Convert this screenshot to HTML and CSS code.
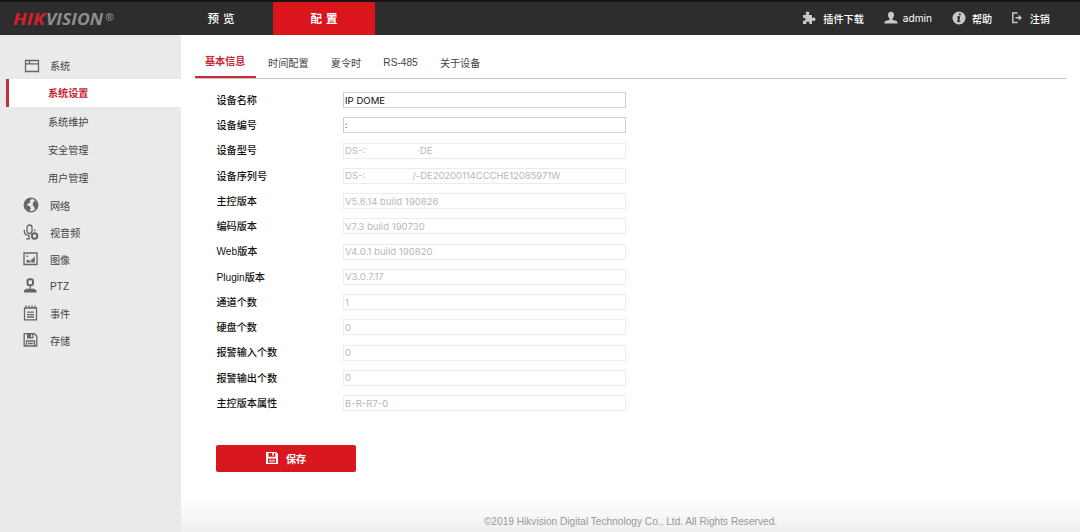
FILE: index.html
```html
<!DOCTYPE html>
<html lang="zh-CN">
<head>
<meta charset="utf-8">
<title>配置</title>
<link rel="stylesheet" href="styles.css">
</head>
<body>
<header class="header">
  <div class="logo"><svg width="103" height="17" viewBox="0 0 103 17"><g class="logo-text"><text class="logo-red" x="0" y="14.700" textLength="32" lengthAdjust="spacingAndGlyphs">HIK</text><text class="logo-gray" x="33" y="14.700" textLength="57" lengthAdjust="spacingAndGlyphs">VISION</text></g><text class="logo-reg" x="92.500" y="10.600">®</text></svg></div>
  <nav class="main-nav"><a class="nav-item">预 览</a><a class="nav-item nav-active">配 置</a></nav>
  <div class="tools">
    <a class="tool tool-plugin"><svg width="14" height="14" viewBox="0 0 14 14"><path d="M1 4h3.300C3 1.600 4 .6 5.500.6S8 1.600 6.800 4H10v3c2-1.100 3.500-.5 3.500 1.200S12 10.500 10 9.400V13H7.200c.6-1.700 0-2.600-1.400-2.600S3.800 11.300 4.400 13H1V9.600c1.700.5 2.500 0 2.500-1.300S2.700 6.500 1 7z"/></svg>插件下载</a>
    <a class="tool tool-user"><svg width="14" height="14" viewBox="0 0 14 14"><path d="M7 .8c2 0 3 1.300 3 3.100C10 5.500 9.300 6.700 8.500 7.400v1.400L12.500 10c.8.3 1 .8 1 2.600H.5c0-1.800.2-2.300 1-2.600l4-1.200V7.400C4.700 6.700 4 5.500 4 3.900 4 2.100 5 .8 7 .8z"/></svg>admin</a>
    <a class="tool tool-help"><svg width="14" height="14" viewBox="0 0 14 14"><circle cx="7" cy="7" r="6.500"/><path class="cut" d="M7.200 2.500h1.700L8.600 4.200H6.900zM5.200 5.300h3L7.400 10h1v1H5.100l.8-4.600h-.9z"/></svg>帮助</a>
    <a class="tool tool-exit"><svg width="12" height="14" viewBox="0 0 12 14"><path class="line" d="M6.500 2H1.800v9.500h4.700M4.500 6.800H10"/><path d="M7.700 3.800l3.300 3-3.300 3z"/></svg>注销</a>
  </div>
</header>
<div class="body">
  <aside class="sidebar">
    <a class="group first"><svg width="16" height="16" viewBox="0 0 16 16"><path d="M1.500 2.500h13v11h-13zM1.500 5.800h13M5.500 2.500v3"/></svg>系统</a>
    <a class="sub sub-active">系统设置</a>
    <a class="sub">系统维护</a>
    <a class="sub">安全管理</a>
    <a class="sub sub-last">用户管理</a>
    <a class="group"><svg width="16" height="16" viewBox="0 0 16 16"><circle cx="8" cy="8" r="6.800"/><path class="solid" d="M2 5C3 2.600 5 1.300 7.600 1.200L8.500 2.500 6.500 4 7.500 5.500 5 6.500 4 8.500 6.500 9l1.200 2-1 3.300C3 13 1 10 2 5zM10 6l1.500-2.500L13.500 5l1 3-1.200 3.500L11.500 12l-.5-2.500L9.500 8z"/></svg>网络</a>
    <a class="group"><svg width="16" height="16" viewBox="0 0 16 16"><rect x="4" y="1" width="5" height="8.500" rx="2.500"/><path d="M1.300 6v1.500C1.500 10 3.500 11.500 6.500 11.500M6 11.500V14.500M3 14.800h4M11.600 5.500v1.800"/><circle class="bold" cx="11.600" cy="12" r="2.700"/></svg>视音频</a>
    <a class="group"><svg width="16" height="16" viewBox="0 0 16 16"><path d="M1 2h13v11.500H1z"/><path class="solid" d="M3.500 11.500V9.800L5 8.500l1.500 1.300 1-.8v2.500zM8.300 11.500V8.500l1.500-.8L11.700 5v6.500zM3.500 4.500h1.500V6H3.500z"/></svg>图像</a>
    <a class="group"><svg width="16" height="16" viewBox="0 0 16 16"><rect class="bold" x="4.500" y="1.300" width="5.500" height="6" rx="2"/><path d="M7.200 7.500v4M2.500 11.300h9.500"/><path class="solid" d="M1 12h12.500v2.500H1z"/></svg>PTZ</a>
    <a class="group"><svg width="16" height="16" viewBox="0 0 16 16"><path d="M1.500 3h12v11.800h-12zM4 7.200h7M4 9.600h7M4 12h7M3 .5v3M6 .5v3M9 .5v3M12 .5v3"/></svg>事件</a>
    <a class="group"><svg width="16" height="16" viewBox="0 0 16 16"><path d="M1.200 1.700h10.300l2.300 2.500v9.800H1.200zM3.500 14V9h8v5M5 11.500h5"/><path class="solid" d="M4 2h6.500v4.500H4z"/><path class="hole" d="M8 2.500h1.300v2.800H8z"/></svg>存储</a>
  </aside>
  <main class="main">
    <nav class="tabs"><a class="tab tab-active">基本信息</a><a class="tab">时间配置</a><a class="tab">夏令时</a><a class="tab">RS-485</a><a class="tab">关于设备</a></nav>
    <div class="form">
      <div class="row"><span class="label">设备名称</span><div class="field enabled">IP DOME</div></div>
      <div class="row"><span class="label">设备编号</span><div class="field enabled"><span class="mark">:</span></div></div>
      <div class="row"><span class="label">设备型号</span><div class="field"><span class="prefix">DS-:</span><span class="model">·DE</span></div></div>
      <div class="row"><span class="label">设备序列号</span><div class="field"><span class="prefix">DS-:</span><span class="serial">/-DE20200114CCCHE12085971W</span></div></div>
      <div class="row"><span class="label">主控版本</span><div class="field">V5.6.14 build 190826</div></div>
      <div class="row"><span class="label">编码版本</span><div class="field">V7.3 build 190730</div></div>
      <div class="row"><span class="label">Web版本</span><div class="field">V4.0.1 build 190820</div></div>
      <div class="row"><span class="label">Plugin版本</span><div class="field">V3.0.7.17</div></div>
      <div class="row"><span class="label">通道个数</span><div class="field">1</div></div>
      <div class="row"><span class="label">硬盘个数</span><div class="field">0</div></div>
      <div class="row"><span class="label">报警输入个数</span><div class="field">0</div></div>
      <div class="row"><span class="label">报警输出个数</span><div class="field">0</div></div>
      <div class="row"><span class="label">主控版本属性</span><div class="field">B-R-R7-0</div></div>
    </div>
    <button class="save"><svg width="12" height="12" viewBox="0 0 12 12"><path fill-rule="evenodd" d="M0 0h10l2 2v10H0zM2.500 1v3.700h6.800V1H8v2.500H6.300V1zM2 6.500V11h8V6.500zM3 7.700h6v.9H3zM3 9.500h6v.8H3z"/></svg>保存</button>
    <footer class="footer">©2019 Hikvision Digital Technology Co., Ltd. All Rights Reserved.</footer>
  </main>
</div>
</body>
</html>
```
FILE: styles.css
```css
* { box-sizing: border-box; }
body {
  margin: 0;
  width: 1080px;
  height: 532px;
  overflow: hidden;
  display: flex;
  flex-direction: column;
  font-family: "Liberation Sans", "Noto Sans CJK SC", sans-serif;
  font-size: 10.15px;
  color: #111;
  background: #fff;
}
.header {
  height: 35px;
  flex: none;
  display: flex;
  background: #2d2d2d;
  border-top: 2px solid #151515;
  color: #fff;
}
.logo { width: 172px; padding: 8px 0 0 13px; }
.logo svg { display: block; overflow: visible; }
.logo-text { font: italic bold 16.5px "Open Sans", sans-serif; }
.logo-red { fill: #d3202b; }
.logo-gray { fill: #8e8e91; }
.logo-reg { font: bold 11px "Liberation Sans", sans-serif; fill: #8e8e91; }
.main-nav { display: flex; }
.nav-item {
  width: 101px;
  display: flex;
  align-items: center;
  justify-content: center;
  padding-bottom: 1px;
  font-size: 11.5px;
  font-weight: 500;
  word-spacing: 1px;
}
.nav-item:first-child { padding-right: 3px; }
.nav-active { width: 102px; background: #da151c; font-weight: 700; }
.tools { margin-left: auto; display: flex; align-items: center; padding: 0 30px 1px 0; font-weight: 500; }
.tool { display: flex; align-items: center; gap: 6px; margin-left: 19px; white-space: nowrap; }
.tool svg { fill: #c8c8c8; }
.tool .cut { fill: #2d2d2d; }
.tool .line { fill: none; stroke: #c8c8c8; stroke-width: 1.5; }
.tool-plugin { gap: 7px; }
.tool-user { margin-left: 20px; font-family: Inter, sans-serif; font-weight: 400; gap: 5px; }
.tool-help { margin-left: 20px; }
.tool-exit { margin-left: 18.5px; gap: 7px; }
.body { flex: 1; display: flex; min-height: 0; }
.sidebar { width: 181px; padding-top: 17px; background: #eaeaea; color: #444; }
.group { height: 27px; display: flex; align-items: center; gap: 11px; padding-left: 23px; }
.group.first { padding: 0 0 0 24px; gap: 10px; }
.group svg { fill: none; stroke: #666; stroke-width: 1.3; }
.group .solid { fill: #666; stroke: none; }
.group .bold { stroke-width: 2; }
.group .hole { fill: #eaeaea; stroke: none; }
.sub { height: 28px; display: flex; align-items: center; margin-left: 6px; padding: 0 0 0 42px; }
.sub-active { padding: 0 0 1px 39px; border-left: 3px solid #c52d3b; background: #fff; color: #c91f32; font-weight: 700; }
.sub-last { margin-bottom: 0.5px; }
.main {
  flex: 1;
  display: flex;
  flex-direction: column;
  background: linear-gradient(#fff 0, #fff 93%, #efefef 100%);
}
.tabs { display: flex; margin: 13px 14px 0; height: 31px; border-bottom: 1px solid #c4c4c4; color: #444; }
.tab { display: flex; align-items: center; padding: 0 11.1px 2px; height: 30px; }
.tab-active { width: 61px; padding: 0 0 4px 10px; border-bottom: 2px solid #ca2937; color: #ca2937; font-weight: 700; margin-right: 1px; }
.form { padding: 8.4px 0 0 35.5px; }
.row { display: flex; align-items: center; height: 25.27px; }
.label { width: 126.5px; padding-bottom: 1.5px; font-weight: 500; }
.field {
  width: 283px;
  height: 16px;
  display: flex;
  align-items: center;
  padding-left: 1px;
  border: 1px solid #ececec;
  background: #fff;
  font-family: Inter, sans-serif;
  font-size: 9.6px;
  color: #b8b8b8;
  white-space: nowrap;
}
.enabled { border-color: #cecece; color: #111; }
.mark { font-size: 8px; }
.prefix { width: 72px; }
.serial { margin-left: -4.5px; letter-spacing: -0.1px; }
.save {
  width: 140px;
  height: 27px;
  margin: 29px 0 0 35px;
  display: flex;
  align-items: center;
  justify-content: center;
  gap: 8px;
  border: 0;
  border-radius: 2px;
  background: #d9171f;
  color: #fff;
  font: 700 10.15px "Noto Sans CJK SC", sans-serif;
}
.save svg { fill: #fff; }
.footer { margin: auto 0 5px; text-align: center; color: #999; font-size: 10.15px; }
```
